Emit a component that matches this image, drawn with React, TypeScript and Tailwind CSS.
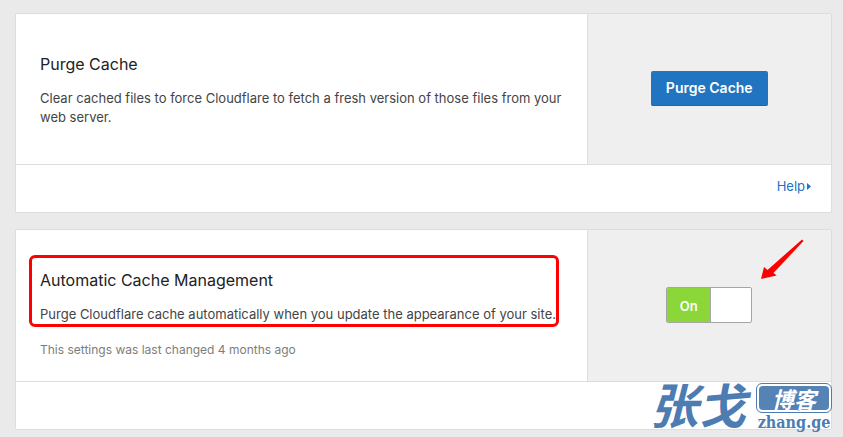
import type { ReactNode } from "react";

type CardProps = {
  title: string;
  description: string;
  note?: string;
  highlighted?: boolean;
  control: ReactNode;
};

function HelpLink() {
  return (
    <a href="#help" className="flex items-center gap-0.5 text-[13px] leading-5 text-[#2174bf]">
      Help
      <svg viewBox="0 0 4 7" className="h-[7px] w-1" fill="currentColor" aria-hidden="true">
        <path d="M0 0 4 3.5 0 7Z" />
      </svg>
    </a>
  );
}

function Card({ title, description, note, highlighted, control }: CardProps) {
  return (
    <section className="rounded-[2px] border border-[#dddddd] bg-white">
      <div className="flex min-h-[151px] border-b border-[#dddddd]">
        <div className="w-[70%] px-6 pt-10 pb-[22px]">
          <div className="relative">
            <h2 className="text-[16px] leading-5 text-[#222222]">{title}</h2>
            <p className="mt-[15px] text-[13px] leading-[19px] text-[#444444]">{description}</p>
            {highlighted && (
              <div className="pointer-events-none absolute -top-[15px] -bottom-[3px] -left-[11px] w-[530px] rounded-md border-3 border-[#fe0000]" />
            )}
          </div>
          {note && <p className="mt-4 text-[12px] leading-[19px] text-[#7d7d7d]">{note}</p>}
        </div>
        <div className="relative flex w-[30%] items-center justify-center border-l border-[#dddddd] bg-[#efefef] pb-0.5">
          {control}
        </div>
      </div>
      <div className="flex h-[47px] items-start justify-end px-5 pt-[11px]">
        <HelpLink />
      </div>
    </section>
  );
}

function Toggle() {
  return (
    <>
      <label className="flex h-9 w-[86px] cursor-pointer overflow-hidden rounded-[2px] border border-[#a6a6a6] bg-white">
        <input type="checkbox" defaultChecked className="sr-only" aria-label="Automatic Cache Management" />
        <span className="flex w-[43px] items-center justify-center bg-[#8bd638] pt-1 text-[13px] font-semibold text-white">
          On
        </span>
        <span className="flex-1 border-l border-[#a6a6a6]" />
      </label>
      <svg
        viewBox="0 0 44 41"
        className="absolute top-[9px] right-[27px] h-[41px] w-11"
        fill="#fe0000"
        aria-hidden="true"
      >
        <path d="M42 .5 43.5 2 13.5 34l3.2 2.6L1 40 4 28l3.5 3Z" />
      </svg>
    </>
  );
}

function Watermark() {
  return (
    <div className="pointer-events-none absolute right-[11px] bottom-1 flex items-end text-[#4c7cb2]">
      <div className="-mb-1.5 pr-2.5 font-['Noto_Sans_CJK_SC',sans-serif] text-[48px] leading-[72px] font-bold italic">
        张戈
      </div>
      <div className="flex flex-col items-center">
        <div className="rounded-md border border-[#4c7cb2] p-0.5">
          <div className="rounded bg-[#4c7cb2]/95 px-[13px] font-['Noto_Sans_CJK_SC',sans-serif] text-[22px] leading-6 font-bold text-white italic">
            博客
          </div>
        </div>
        <div className="font-['DejaVu_Serif_Condensed','DejaVu_Serif',serif] text-[16px] leading-5 font-bold">
          zhang.ge
        </div>
      </div>
    </div>
  );
}

export default function App() {
  return (
    <main className="relative flex min-h-screen flex-col gap-4 bg-[#eaeaea] pt-[13px] pr-[11px] pb-[7px] pl-[15px] font-['Inter',sans-serif]">
      <Card
        title="Purge Cache"
        description="Clear cached files to force Cloudflare to fetch a fresh version of those files from your web server."
        control={
          <button
            type="button"
            className="h-[35px] rounded-[2px] border-b border-[#1b68ae] bg-[#2174bf] px-[15px] text-[14px] font-semibold text-white"
          >
            Purge Cache
          </button>
        }
      />
      <Card
        title="Automatic Cache Management"
        description="Purge Cloudflare cache automatically when you update the appearance of your site."
        note="This settings was last changed 4 months ago"
        highlighted
        control={<Toggle />}
      />
      <Watermark />
    </main>
  );
}
